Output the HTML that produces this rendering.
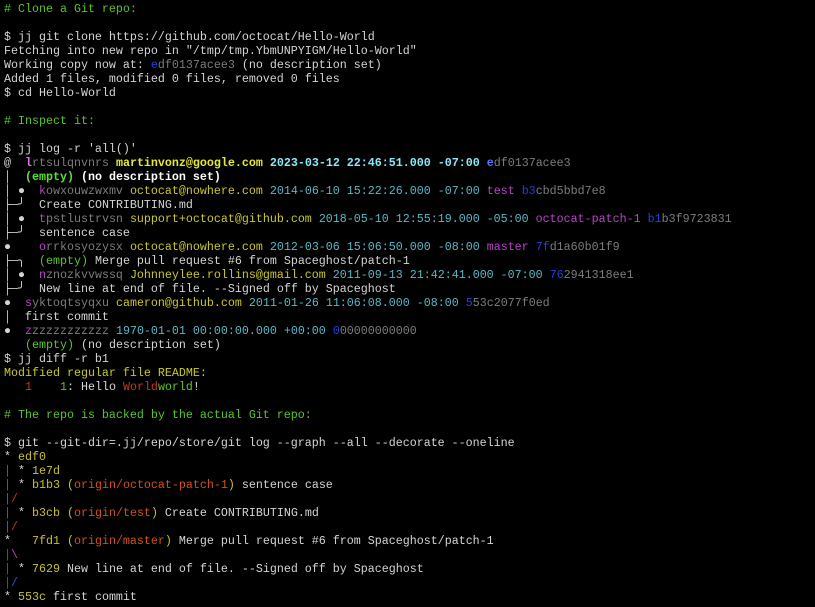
<!DOCTYPE html>
<html><head><meta charset="utf-8"><style>
body{margin:0;background:#000;width:815px;height:607px;overflow:hidden}
#t{position:absolute;left:4px;top:1.5px;font-family:"Liberation Mono","DejaVu Sans Mono",monospace;font-size:11.67px;color:#d4d4d4}
#t div{height:14px;line-height:14px;white-space:pre}
.c{color:#58c42a}.y{color:#c8c828}.cy{color:#5ab8c4}.m{color:#b845c8}.b{color:#2a3ee0}.g{color:#7c7c7c}
.r{color:#c8381a}.gr{color:#58c42a}.B{font-weight:bold}.by{color:#e8e838;font-weight:bold}.bc{color:#8ae8f8;font-weight:bold}
.bm{color:#e070f0;font-weight:bold}.bb{color:#6070ff;font-weight:bold}.bg{color:#58e030;font-weight:bold}.W{color:#fff;font-weight:bold}
.o{color:#d05020}.gy{color:#c8c030}.pu{color:#c040c0}.bl{color:#3050e0}
</style></head><body><div id="t">
<div class="c"># Clone a Git repo:</div>
<div> </div>
<div>$ jj git clone https://github.com/octocat/Hello-World</div>
<div>Fetching into new repo in "/tmp/tmp.YbmUNPYIGM/Hello-World"</div>
<div>Working copy now at: <span class="b">e</span><span class="g">df0137acee3</span> (no description set)</div>
<div>Added 1 files, modified 0 files, removed 0 files</div>
<div>$ cd Hello-World</div>
<div> </div>
<div class="c"># Inspect it:</div>
<div> </div>
<div>$ jj log -r 'all()'</div>
<div>@  <span class="bm">l</span><span class="g">rtsulqnvnrs</span> <span class="by">martinvonz@google.com</span> <span class="bc">2023-03-12 22:46:51.000 -07:00</span> <span class="bb">e</span><span class="g">df0137acee3</span></div>
<div>│  <span class="bg">(empty)</span> <span class="W">(no description set)</span></div>
<div>│ ●  <span class="m">k</span><span class="g">owxouwzwxmv</span> <span class="y">octocat@nowhere.com</span> <span class="cy">2014-06-10 15:22:26.000 -07:00</span> <span class="m">test</span> <span class="b">b3</span><span class="g">cbd5bbd7e8</span></div>
<div>├─╯  Create CONTRIBUTING.md</div>
<div>│ ●  <span class="m">t</span><span class="g">pstlustrvsn</span> <span class="y">support+octocat@github.com</span> <span class="cy">2018-05-10 12:55:19.000 -05:00</span> <span class="m">octocat-patch-1</span> <span class="b">b1</span><span class="g">b3f9723831</span></div>
<div>├─╯  sentence case</div>
<div>●    <span class="m">o</span><span class="g">rrkosyozysx</span> <span class="y">octocat@nowhere.com</span> <span class="cy">2012-03-06 15:06:50.000 -08:00</span> <span class="m">master</span> <span class="b">7f</span><span class="g">d1a60b01f9</span></div>
<div>├─╮  <span class="gr">(empty)</span> Merge pull request #6 from Spaceghost/patch-1</div>
<div>│ ●  <span class="m">n</span><span class="g">znozkvvwssq</span> <span class="y">Johnneylee.rollins@gmail.com</span> <span class="cy">2011-09-13 21:42:41.000 -07:00</span> <span class="b">76</span><span class="g">2941318ee1</span></div>
<div>├─╯  New line at end of file. --Signed off by Spaceghost</div>
<div>●  <span class="m">s</span><span class="g">yktoqtsyqxu</span> <span class="y">cameron@github.com</span> <span class="cy">2011-01-26 11:06:08.000 -08:00</span> <span class="b">5</span><span class="g">53c2077f0ed</span></div>
<div>│  first commit</div>
<div>●  <span class="m">z</span><span class="g">zzzzzzzzzzz</span> <span class="cy">1970-01-01 00:00:00.000 +00:00</span> <span class="b">0</span><span class="g">00000000000</span></div>
<div>   <span class="gr">(empty)</span> (no description set)</div>
<div>$ jj diff -r b1</div>
<div class="y">Modified regular file README:</div>
<div>   <span class="r">1</span>    <span class="gr">1</span>: Hello <span class="r">World</span><span class="gr">world</span>!</div>
<div> </div>
<div class="c"># The repo is backed by the actual Git repo:</div>
<div> </div>
<div>$ git --git-dir=.jj/repo/store/git log --graph --all --decorate --oneline</div>
<div>* <span class="gy">edf0</span></div>
<div><span class="r">|</span> * <span class="gy">1e7d</span></div>
<div><span class="r">|</span> * <span class="gy">b1b3 (</span><span class="o">origin/octocat-patch-1</span><span class="gy">)</span> sentence case</div>
<div><span class="r">|/</span></div>
<div><span class="r">|</span> * <span class="gy">b3cb (</span><span class="o">origin/test</span><span class="gy">)</span> Create CONTRIBUTING.md</div>
<div><span class="r">|/</span></div>
<div>*   <span class="gy">7fd1 (</span><span class="o">origin/master</span><span class="gy">)</span> Merge pull request #6 from Spaceghost/patch-1</div>
<div><span class="bl">|</span><span class="pu">\</span></div>
<div><span class="bl">|</span> * <span class="gy">7629</span> New line at end of file. --Signed off by Spaceghost</div>
<div><span class="bl">|/</span></div>
<div>* <span class="gy">553c</span> first commit</div>
</div></body></html>
